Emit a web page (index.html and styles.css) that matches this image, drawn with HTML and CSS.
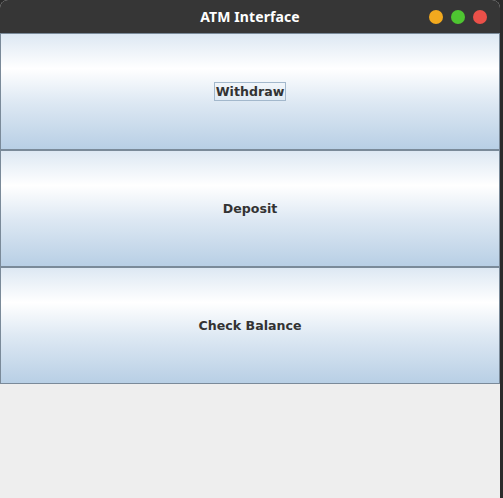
FILE: index.html
```html
<!DOCTYPE html>
<html>
<head>
<meta charset="utf-8">
<link rel="stylesheet" href="styles.css">
</head>
<body>
<div class="window">
  <div class="titlebar">
    <span class="title">ATM Interface</span>
    <div class="controls">
      <span class="dot min"></span>
      <span class="dot max"></span>
      <span class="dot close"></span>
    </div>
  </div>
  <div class="content">
    <div class="buttons">
      <button class="btn"><span class="label focus">Withdraw</span></button>
      <button class="btn"><span class="label">Deposit</span></button>
      <button class="btn"><span class="label">Check Balance</span></button>
    </div>
  </div>
</div>
</body>
</html>
```
FILE: styles.css
```css
html, body {
  margin: 0;
  padding: 0;
}
body {
  width: 503px;
  height: 498px;
  background: #2b2b2b;
  overflow: hidden;
}
.window {
  width: 500px;
  height: 498px;
  display: flex;
  flex-direction: column;
  background: #eeeeee;
  border-radius: 8px 8px 0 0;
  overflow: hidden;
}
.titlebar {
  height: 33px;
  flex: none;
  background: #363636;
  position: relative;
  display: flex;
  align-items: center;
  justify-content: center;
}
.title {
  color: #ffffff;
  font-family: "Noto Sans", "DejaVu Sans", sans-serif;
  font-weight: 700;
  font-size: 14px;
  letter-spacing: 0.1px;
}
.controls {
  position: absolute;
  right: 13px;
  top: 10px;
  display: flex;
  gap: 8px;
}
.dot {
  width: 14px;
  height: 14px;
  border-radius: 50%;
  display: block;
}
.min { background: #f2a91e; }
.max { background: #4ec531; }
.close { background: #ea5049; }
.content {
  flex: 1;
  background: #eeeeee;
}
.buttons {
  display: flex;
  flex-direction: column;
}
.btn {
  box-sizing: border-box;
  width: 500px;
  height: 117px;
  margin: 0;
  padding: 0;
  border: 1px solid #7a8a99;
  background: linear-gradient(to bottom, #dde8f3 0%, #ffffff 30%, #dde8f3 60%, #b8cfe5 100%);
  font-family: "DejaVu Sans", sans-serif;
  font-weight: 700;
  font-size: 12.6px;
  color: #333333;
  display: flex;
  align-items: center;
  justify-content: center;
}
.label {
  padding: 1px 1px;
  border: 1px solid transparent;
}
.label.focus {
  border-color: #a3b8cc;
}
```
